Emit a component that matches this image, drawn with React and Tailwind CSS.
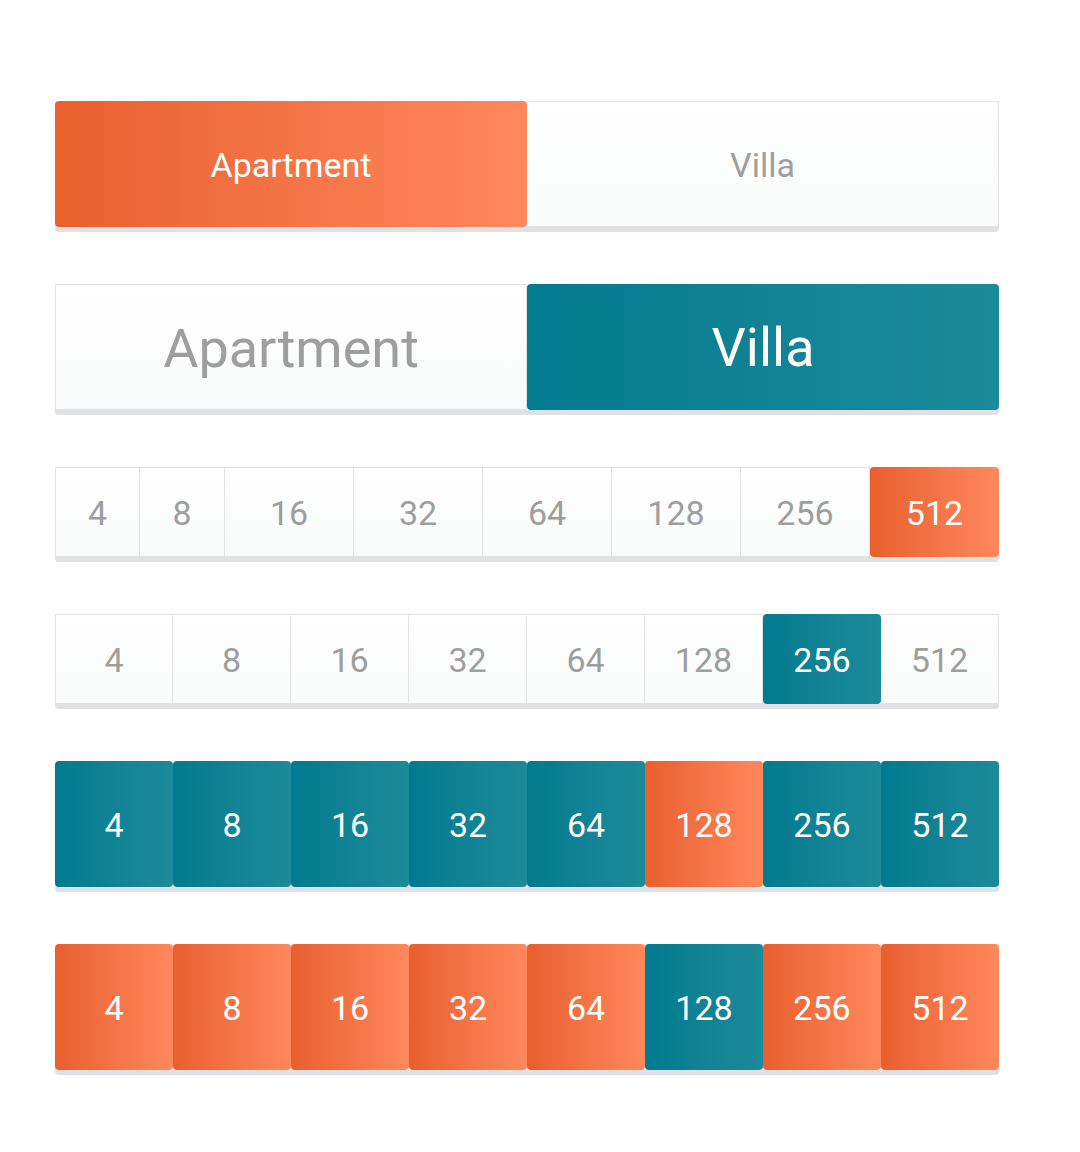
import React from 'react';

const ORANGE = 'bg-linear-to-r from-[#e95f2e] to-[#ff885c]';
const TEAL = 'bg-linear-to-r from-[#027a8f] to-[#1b8b99]';
const IDLE = 'bg-linear-to-b from-white to-[#f9fafa] text-[#9e9e9e] border-y border-r border-[#e3e3e3]';

const nums = ['4', '8', '16', '32', '64', '128', '256', '512'];

function Cell({ label, tone, first, className = '' }) {
  let look = IDLE + (first ? ' border-l' : '');
  if (tone === 'orange') look = `${ORANGE} text-white rounded-[4px]`;
  if (tone === 'teal') look = `${TEAL} text-white rounded-[4px]`;
  return (
    <div className={`shrink-0 flex items-center justify-center ${look} ${className}`}>
      {label}
    </div>
  );
}

function Row({ height, children }) {
  return (
    <div className={`flex ${height} rounded-[4px] shadow-[0_5px_0_#e0e1e6]`}>
      {children}
    </div>
  );
}

export default function App() {
  return (
    <div
      className="min-h-[1152px] bg-white pt-[101px] pl-[55px] text-[34px] leading-none"
      style={{ fontFamily: 'Roboto, "Noto Sans", sans-serif' }}
    >
      <div className="w-[944px] flex flex-col gap-[57px]">
        {/* Segmented: Apartment / Villa */}
        <Row height="h-[126px]">
          <Cell label="Apartment" tone="orange" className="w-[472px] pt-[2px]" />
          <Cell label="Villa" className="w-[472px] pt-[2px]" />
        </Row>

        <Row height="h-[126px]">
          <Cell label="Apartment" first className="w-[472px] pt-[4px] text-[54px]" />
          <Cell label="Villa" tone="teal" className="w-[472px] pt-[2px] text-[54px]" />
        </Row>

        {/* Numeric pickers */}
        <Row height="h-[90px]">
          {nums.map((n, i) => (
            <Cell
              key={n}
              label={n}
              first={i === 0}
              tone={n === '512' ? 'orange' : undefined}
              className={`pt-[2px] ${i < 2 ? 'w-[85px]' : 'w-[129px]'}`}
            />
          ))}
        </Row>

        <Row height="h-[90px]">
          {nums.map((n, i) => (
            <Cell
              key={n}
              label={n}
              first={i === 0}
              tone={n === '256' ? 'teal' : undefined}
              className="w-[118px] pt-[2px]"
            />
          ))}
        </Row>

        <Row height="h-[126px]">
          {nums.map((n) => (
            <Cell key={n} label={n} tone={n === '128' ? 'orange' : 'teal'} className="w-[118px] pt-[2px]" />
          ))}
        </Row>

        <Row height="h-[126px]">
          {nums.map((n) => (
            <Cell key={n} label={n} tone={n === '128' ? 'teal' : 'orange'} className="w-[118px] pt-[2px]" />
          ))}
        </Row>
      </div>
    </div>
  );
}
